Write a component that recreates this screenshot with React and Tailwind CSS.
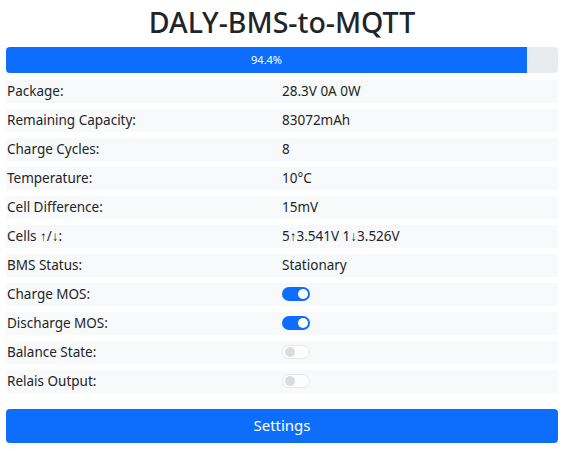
import React from 'react';

const rows = [
  { label: 'Package:', value: '28.3V 0A 0W' },
  { label: 'Remaining Capacity:', value: '83072mAh' },
  { label: 'Charge Cycles:', value: '8' },
  { label: 'Temperature:', value: '10°C' },
  { label: 'Cell Difference:', value: '15mV' },
  { label: 'Cells ↑/↓:', value: '5↑3.541V 1↓3.526V' },
  { label: 'BMS Status:', value: 'Stationary' },
  { label: 'Charge MOS:', toggle: true, on: true },
  { label: 'Discharge MOS:', toggle: true, on: true },
  { label: 'Balance State:', toggle: true, on: false },
  { label: 'Relais Output:', toggle: true, on: false },
];

function Switch({ on }) {
  if (on) {
    return (
      <span className="flex h-[14px] w-[28px] items-center justify-end rounded-full bg-[#0d6efd] pr-[2px]">
        <span className="h-[10px] w-[10px] rounded-full bg-white" />
      </span>
    );
  }
  return (
    <span className="flex h-[14px] w-[28px] items-center rounded-full border border-[#e3e5e8] bg-white pl-[2px] opacity-80">
      <span className="h-[10px] w-[10px] rounded-full bg-[#d4d6d9]" />
    </span>
  );
}

export default function App() {
  const percent = 94.4;
  return (
    <div className="min-h-[451px] bg-white px-[6px] pt-[4px] text-[#212529]" style={{ fontFamily: '"Noto Sans", "Open Sans", sans-serif' }}>
      {/* Title */}
      <h1 className="text-center text-[28.5px] font-medium leading-[36px]">DALY-BMS-to-MQTT</h1>

      {/* Progress */}
      <div className="mt-[7px] flex h-[26px] overflow-hidden rounded-[4px] bg-[#e9ecef]">
        <div
          className="flex items-center justify-center bg-[#0d6efd] text-[11px] text-white"
          style={{ width: `${percent}%` }}
        >
          94.4%
        </div>
      </div>

      {/* Data rows */}
      <div className="mt-[7px] flex flex-col gap-[6.3px]">
        {rows.map((row) => (
          <div key={row.label} className="grid h-[22.7px] grid-cols-2 items-center bg-[#f8f9fa] text-[13.5px]">
            <div className="pl-[1px]">{row.label}</div>
            <div className="flex">{row.toggle ? <Switch on={row.on} /> : row.value}</div>
          </div>
        ))}
      </div>

      {/* Settings button */}
      <button className="mt-[16px] h-[34px] w-full rounded-[4px] bg-[#0d6efd] text-[15px] text-white">
        Settings
      </button>
    </div>
  );
}
